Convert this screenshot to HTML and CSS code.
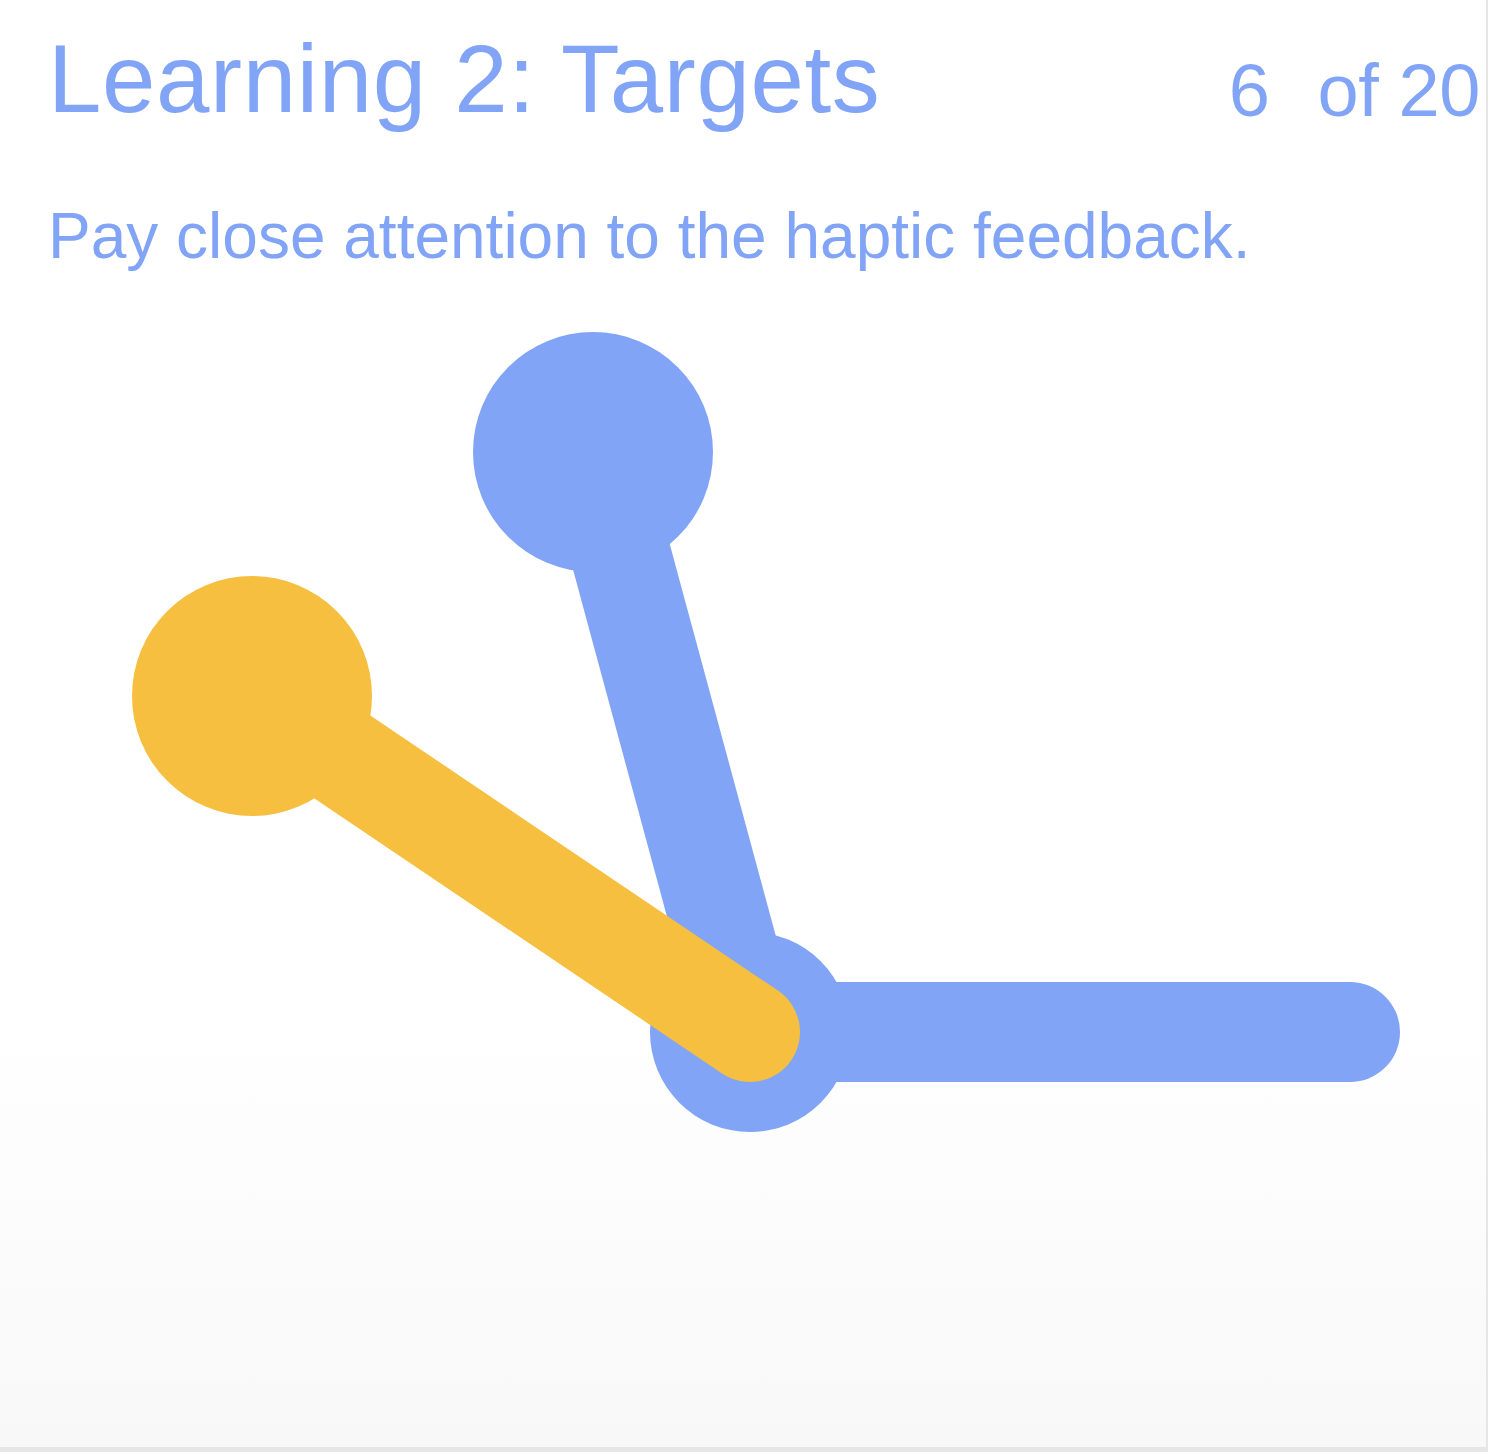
FILE: index.html
```html
<!DOCTYPE html>
<html lang="en">
<head>
<meta charset="utf-8">
<title>Learning 2: Targets</title>
<link rel="stylesheet" href="styles.css">
</head>
<body>
<div class="frame">
  <header class="header">
    <h1 class="title">Learning 2: Targets</h1>
    <div class="counter"><span class="count-current">6</span><span class="count-total">of 20</span></div>
  </header>
  <p class="subtitle">Pay close attention to the haptic feedback.</p>
  <svg class="canvas" viewBox="0 268 1486 1179" width="1486" height="1179" xmlns="http://www.w3.org/2000/svg">
    <g class="blue" stroke="#81a4f6" fill="#81a4f6" stroke-linecap="round">
      <line x1="750" y1="1032" x2="1350" y2="1032" stroke-width="100"/>
      <line x1="750" y1="1032" x2="593" y2="452" stroke-width="100" stroke-linecap="butt"/>
      <circle cx="750" cy="1032" r="100" stroke="none"/>
      <circle cx="593" cy="452" r="120" stroke="none"/>
    </g>
    <g class="yellow" stroke="#f6bf3f" fill="#f6bf3f" stroke-linecap="round">
      <line x1="252" y1="696" x2="750" y2="1032" stroke-width="100"/>
      <circle cx="252" cy="696" r="120" stroke="none"/>
    </g>
  </svg>
</div>
</body>
</html>
```

FILE: styles.css
```css
html, body {
  margin: 0;
  padding: 0;
}

body {
  background: #e6e6e6;
  width: 1488px;
  height: 1452px;
  overflow: hidden;
}

.frame {
  width: 1486px;
  height: 1447px;
  background: linear-gradient(to bottom, #ffffff 70%, #f8f8f8 100%);
  display: flex;
  flex-direction: column;
  font-family: "Liberation Sans", Arial, sans-serif;
  color: #81a4f6;
}

.header {
  display: flex;
  justify-content: space-between;
  align-items: flex-start;
  padding: 31px 6px 0 48px;
}

.title {
  margin: 0;
  font-size: 96px;
  font-weight: normal;
  line-height: 1;
  letter-spacing: 0.65px;
  white-space: nowrap;
}

.counter {
  display: flex;
  gap: 48px;
  margin-top: 23px;
  font-size: 74px;
  line-height: 1;
  letter-spacing: -0.4px;
  white-space: nowrap;
}

.subtitle {
  margin: 76px 0 0 48px;
  font-size: 64px;
  line-height: 1;
  white-space: nowrap;
}

.canvas {
  display: block;
  flex: none;
}
```
